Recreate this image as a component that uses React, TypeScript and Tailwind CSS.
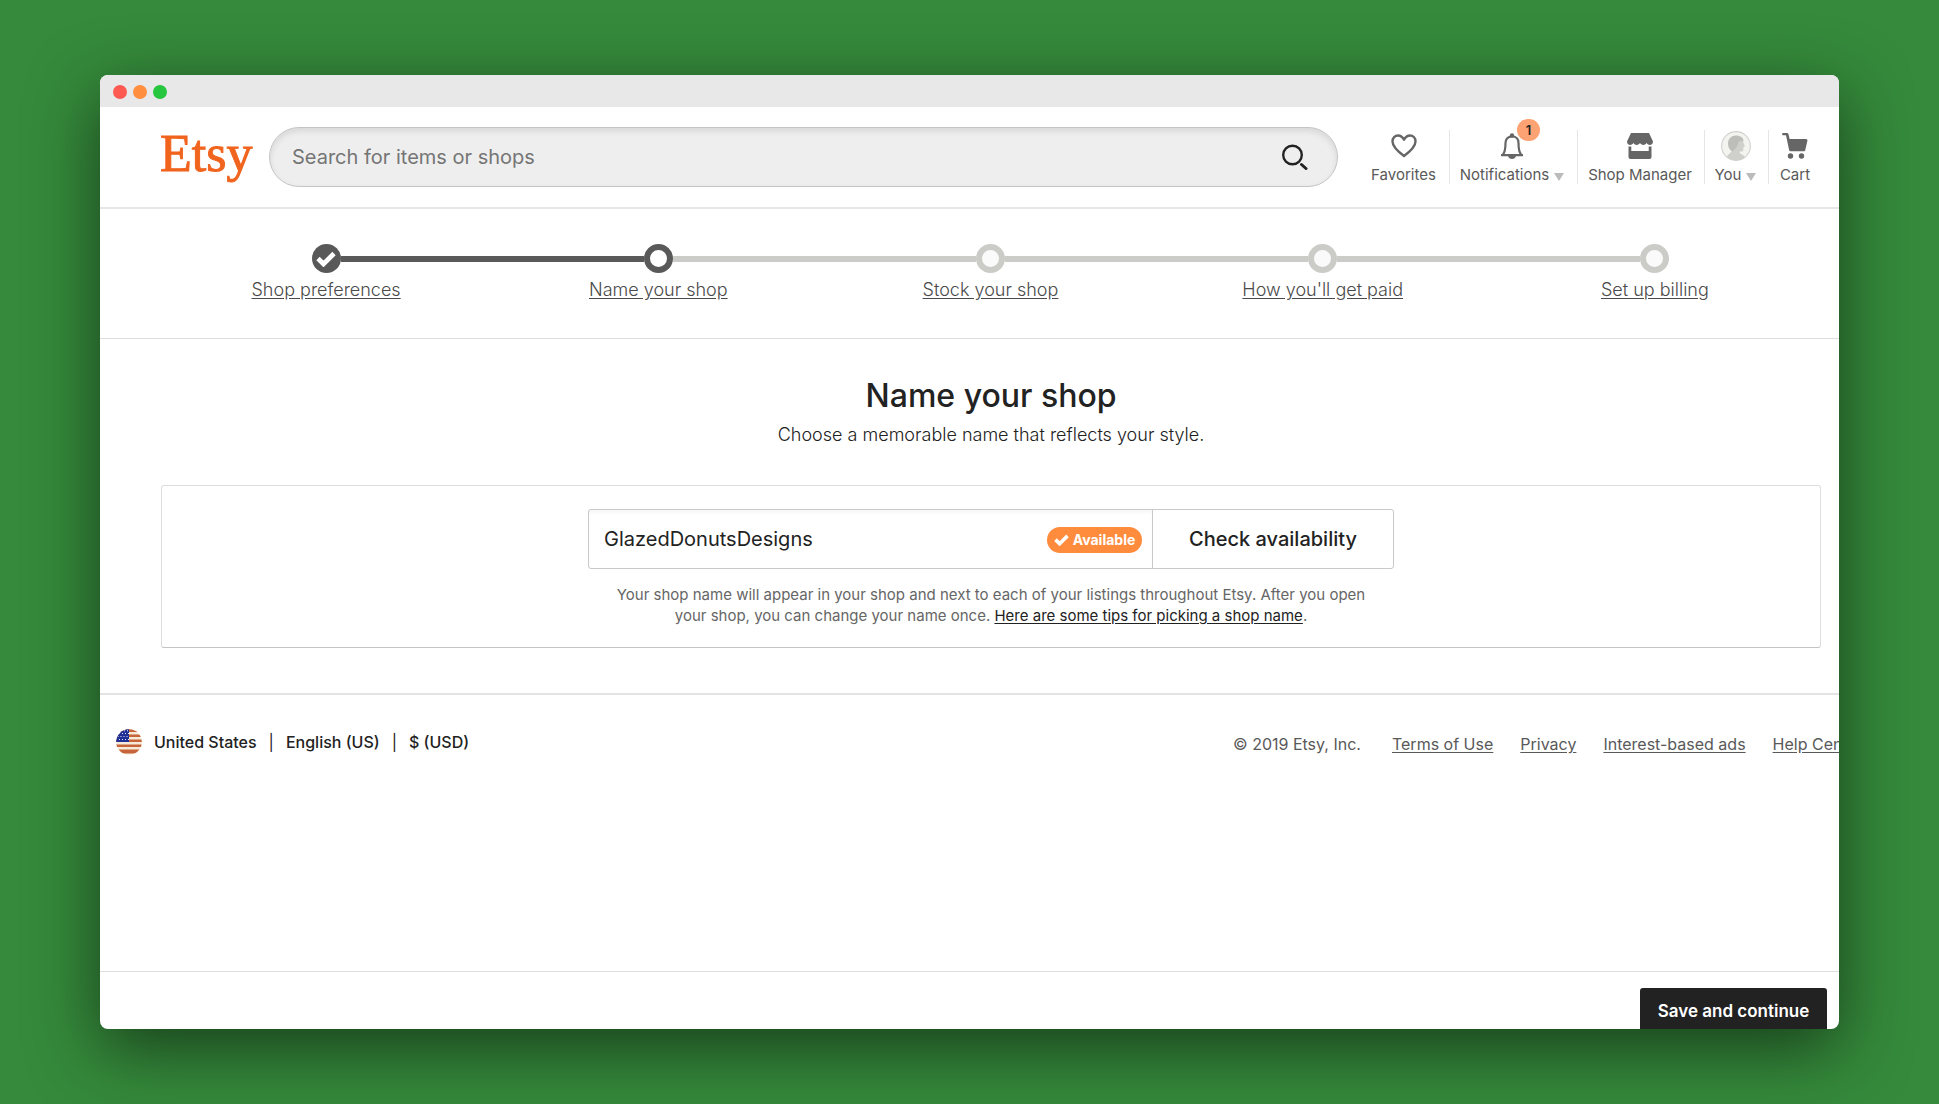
import type { ReactNode } from 'react';

const steps = [
  { label: 'Shop preferences', state: 'done' },
  { label: 'Name your shop', state: 'current' },
  { label: 'Stock your shop', state: 'todo' },
  { label: "How you'll get paid", state: 'todo' },
  { label: 'Set up billing', state: 'todo' },
];

function HeartIcon() {
  return (
    <svg viewBox="0 0 26 24" className="h-6 w-[26px]" fill="none" stroke="#666" strokeWidth="2.4" strokeLinejoin="round">
      <path d="M13 22C9 19 1.500 13 1.500 7.500 1.500 4 4 1.500 7 1.500c2.600 0 4.600 1.500 6 4.200 1.400-2.700 3.400-4.200 6-4.200 3 0 5.500 2.500 5.500 6C24.500 13 17 19 13 22z" />
    </svg>
  );
}

function BellIcon() {
  return (
    <svg viewBox="0 0 24 26" className="h-[26px] w-6" fill="none">
      <path d="M12 3.500c-4.600 0-6.500 3-6.500 6.500 0 6-.5 9-2.700 12h18.400C19 19 18.500 16 18.500 10c0-3.500-1.900-6.500-6.500-6.500z" stroke="#666" strokeWidth="2.200" strokeLinejoin="round" />
      <path d="M1 21h22v2.200H1z" fill="#666" />
      <circle cx="12" cy="2.500" r="2.200" fill="#666" />
      <path d="M8 23h8c-.5 2-2 3-4 3s-3.500-1-4-3z" fill="#666" />
    </svg>
  );
}

function ShopIcon() {
  return (
    <svg viewBox="0 0 26 26" className="h-[26px] w-[26px]" fill="#666">
      <path d="M4 0h18l4 8.500c0 2-1.300 3.500-3.200 3.500-1.500 0-2.700-.9-3.200-2.200-.5 1.300-1.800 2.200-3.300 2.200S13.500 11.100 13 9.800c-.5 1.300-1.800 2.200-3.300 2.200s-2.800-.9-3.300-2.200C5.900 11.100 4.700 12 3.200 12 1.300 12 0 10.500 0 8.500z" />
      <path d="M1.500 13.500h2.800V18h17.400v-4.500h2.800V24a2 2 0 0 1-2 2h-19a2 2 0 0 1-2-2z" />
    </svg>
  );
}

function AvatarIcon() {
  return (
    <svg viewBox="0 0 30 30" className="h-[30px] w-[30px]">
      <circle cx="15" cy="15" r="14.400" fill="#f3f3ef" stroke="#d2d2ce" strokeWidth="1.100" />
      <path d="M6 26.500c.5-3.500 4-4.500 5-6.500V9h11l.5 3 1.500 3.300-1.500.7-.3 3.500c-.2 1-1.200 1.200-3.700 1 0 3 4.500 3 5.500 6-2.500 2-5.500 3-9 3s-6.500-1-9-3z" fill="#cfcfcb" />
      <path d="M11 20.500C8.500 19 7 16 7 12.500 7 7.500 10.500 4.500 15 4.500c4.500 0 7.500 2.300 7.500 5.500-3.500-.8-5 0-5.500 2.500-.6 3.500-3 6-6 8z" fill="#bdbdba" />
    </svg>
  );
}

function CartIcon() {
  return (
    <svg viewBox="0 0 26 26" className="h-[26px] w-[26px]" fill="#666">
      <path d="M1.200 0H5c.8 0 1.300.4 1.500 1.200L7.600 6H24c1 0 1.600.8 1.400 1.700L23.300 17c-.2.900-.8 1.300-1.600 1.300H8.800c-.9 0-1.500-.5-1.700-1.300L4 2.300H1.200a1.150 1.150 0 0 1 0-2.300z" />
      <circle cx="8.500" cy="23" r="2.700" />
      <circle cx="19.500" cy="23" r="2.700" />
    </svg>
  );
}

function Check({ className }: { className: string }) {
  return (
    <svg viewBox="0 0 20 16" className={className} fill="none" stroke="#fff" strokeWidth="4.800">
      <path d="M2 7.500l5.500 5.500L18 2.500" />
    </svg>
  );
}

function Caret() {
  return (
    <svg viewBox="0 0 10 8" className="mt-1 h-2 w-[10px]" fill="#bbb">
      <path d="M0 0h10L5 8z" />
    </svg>
  );
}

function Flag() {
  return (
    <svg viewBox="0 0 26 26" className="h-[26px] w-[26px] shrink-0">
      <defs>
        <clipPath id="flag-round">
          <circle cx="13" cy="13" r="12.800" />
        </clipPath>
      </defs>
      <g clipPath="url(#flag-round)">
        <path fill="#f6ead8" d="M0 0h26v26H0z" />
        <path fill="#c8643a" d="M0 0h26v3H0zM0 5.500h26v2.500H0zM0 10.500h26V13H0zM0 15.500h26V18H0zM0 20.500h26v4H0z" />
        <path fill="#1f2f96" d="M0 0h13v13H0z" />
        <path d="M3 4.500h10M1.500 7.500h10M3 10.500h10M5 1.800h8" stroke="#e8ecff" strokeWidth="1" strokeDasharray="1 2" />
      </g>
    </svg>
  );
}

function NavItem({ icon, label, caret, className }: { icon: ReactNode; label: string; caret?: boolean; className: string }) {
  return (
    <li className={className}>
      <a href="#" className="flex h-[54px] flex-col items-center justify-between text-[15px] leading-[18px] text-[#595959]">
        <span className="flex h-8 items-center justify-center">{icon}</span>
        <span className="flex items-center gap-[5px] whitespace-nowrap">
          {label}
          {caret && <Caret />}
        </span>
      </a>
    </li>
  );
}

export default function App() {
  return (
    <div className="h-screen min-h-[900px] bg-[#358a3b] px-[100px] py-[75px] font-['Inter','Liberation_Sans',sans-serif] text-[#222]">
      <div className="flex h-full flex-col overflow-hidden rounded-lg bg-white shadow-[0_20px_68px_rgba(0,0,0,0.55)]">
        <div className="flex h-8 shrink-0 items-center gap-[6px] bg-[#e8e8e8] pt-[2px] pl-[13px]">
          <span className="size-[14px] rounded-full bg-[#ff5a52]" />
          <span className="size-[14px] rounded-full bg-[#ff8f3f]" />
          <span className="size-[14px] rounded-full bg-[#26c63f]" />
        </div>

        <header className="flex h-[102px] shrink-0 items-center border-b-2 border-[#e6e6e6] pr-[18px] pl-[60px]">
          <a href="#" className="w-[109px] pb-[6px] font-['Liberation_Serif',serif] text-[52px] leading-[60px] text-[#f1641e] [-webkit-text-stroke:1px_#f1641e]">
            Etsy
          </a>
          <form className="flex h-[60px] min-w-0 flex-1 items-center rounded-full border border-[#c4c4c4] bg-[#eee] pr-[29px] pl-[22px] shadow-[inset_0_3px_6px_rgba(0,0,0,0.1)]">
            <input
              type="search"
              aria-label="Search"
              placeholder="Search for items or shops"
              className="min-w-0 flex-1 bg-transparent text-xl text-[#222] outline-none placeholder:text-[#757575]"
            />
            <button type="button" aria-label="Search">
              <svg viewBox="0 0 26 26" className="h-[26px] w-[26px]" fill="none" stroke="#222" strokeWidth="2.400" strokeLinecap="round">
                <circle cx="10.500" cy="11" r="9.300" />
                <path d="M19.500 20.500l4.500 4" strokeWidth="3" />
              </svg>
            </button>
          </form>
          <nav className="ml-6">
            <ul className="flex divide-x divide-[#e6e6e6]">
              <NavItem icon={<HeartIcon />} label="Favorites" className="w-[88px] pr-1" />
              <NavItem
                icon={
                  <span className="relative">
                    <BellIcon />
                    <span className="absolute -top-[14px] left-[17px] flex h-[22px] w-[23px] items-center justify-center rounded-full bg-[#fda273] text-[13px] leading-none font-semibold text-[#222]">
                      1
                    </span>
                  </span>
                }
                label="Notifications"
                caret
                className="w-[128px] pr-[3px]"
              />
              <NavItem icon={<ShopIcon />} label="Shop Manager" className="w-[127px] pr-[2px]" />
              <NavItem icon={<AvatarIcon />} label="You" caret className="w-[64px] pr-[2px]" />
              <NavItem icon={<CartIcon />} label="Cart" className="w-[52px]" />
            </ul>
          </nav>
        </header>

        <nav className="h-[130px] shrink-0 border-b border-[#dedede] pt-[35px] pr-[18px] pl-[60px]">
          <ol className="grid grid-cols-5">
            {steps.map((step, i) => (
              <li key={step.label} className="flex flex-col items-center">
                <div className="flex w-full items-center">
                  <span className={i === 0 ? 'h-[6px] flex-1' : step.state === 'todo' ? 'h-[6px] flex-1 bg-[#cbccc7]' : 'h-[6px] flex-1 bg-[#595959]'} />
                  {step.state === 'done' && (
                    <span className="flex size-[29px] items-center justify-center rounded-full bg-[#595959]">
                      <Check className="h-4 w-5" />
                    </span>
                  )}
                  {step.state === 'current' && <span className="size-[29px] rounded-full border-[6px] border-[#595959]" />}
                  {step.state === 'todo' && <span className="size-[29px] rounded-full border-[6px] border-[#cbccc7] bg-[#fafafa]" />}
                  <span className={i === 4 ? 'h-[6px] flex-1' : step.state === 'done' ? 'h-[6px] flex-1 bg-[#595959]' : 'h-[6px] flex-1 bg-[#cbccc7]'} />
                </div>
                <a href="#" className="mt-[5px] text-lg leading-6 font-light text-[#4a4a4a] underline underline-offset-2">
                  {step.label}
                </a>
              </li>
            ))}
          </ol>
        </nav>

        <main className="flex shrink-0 flex-col pr-[18px] pb-[45px] pl-[61px] text-center">
          <h1 className="mt-[37px] text-[32px] leading-10 font-medium">Name your shop</h1>
          <p className="mt-[7px] text-lg leading-6 font-light text-[#222]">Choose a memorable name that reflects your style.</p>
          <section className="mt-[38px] flex flex-col items-center rounded-[3px] border border-[#dedede] border-b-[#c4c4c4] pt-[23px] pb-[21px]">
            <div className="flex h-[60px] w-[806px] max-w-full rounded-[3px] border border-[#c9c9c9]">
              <div className="flex min-w-0 flex-1 items-center border-r border-[#c9c9c9] pr-[10px] pl-[15px] shadow-[inset_0_3px_3px_rgba(0,0,0,0.03)]">
                <input aria-label="Shop name" defaultValue="GlazedDonutsDesigns" className="min-w-0 flex-1 bg-transparent text-xl outline-none" />
                <span className="mt-[2px] flex h-[26px] w-[95px] items-center justify-center gap-1 rounded-full bg-[#ff8b3d] text-sm font-bold text-white">
                  <Check className="h-3 w-[15px]" />
                  Available
                </span>
              </div>
              <button className="w-60 text-xl font-medium">Check availability</button>
            </div>
            <p className="mt-[15px] w-[770px] max-w-full text-[15px] leading-[21px] text-[#666]">
              Your shop name will appear in your shop and next to each of your listings throughout Etsy. After you open your shop, you can change your name once.{' '}
              <a href="#" className="text-[#222] underline underline-offset-2">
                Here are some tips for picking a shop name
              </a>
              .
            </p>
          </section>
        </main>

        <footer className="flex flex-1 items-start justify-between border-t-2 border-[#e3e3e3] pt-[34px] pl-4">
          <div className="flex shrink-0 items-center gap-3 text-base leading-[26px] font-medium">
            <Flag />
            <span>United States</span>
            <span className="font-normal">|</span>
            <span>English (US)</span>
            <span className="font-normal">|</span>
            <span>$ (USD)</span>
          </div>
          <div className="flex w-[606px] shrink-0 gap-[27px] overflow-hidden text-base leading-[30px] whitespace-nowrap text-[#595959]">
            <span className="mr-1">© 2019 Etsy, Inc.</span>
            <a href="#" className="underline underline-offset-2">Terms of Use</a>
            <a href="#" className="underline underline-offset-2">Privacy</a>
            <a href="#" className="underline underline-offset-2">Interest-based ads</a>
            <a href="#" className="underline underline-offset-2">Help Center</a>
          </div>
        </footer>

        <div className="flex h-[58px] shrink-0 items-start justify-end overflow-hidden border-t border-[#dedede] pt-4 pr-3">
          <button className="h-[50px] w-[187px] shrink-0 rounded-[3px] bg-[#222] pb-1 text-[17px] leading-6 font-semibold text-white">Save and continue</button>
        </div>
      </div>
    </div>
  );
}
